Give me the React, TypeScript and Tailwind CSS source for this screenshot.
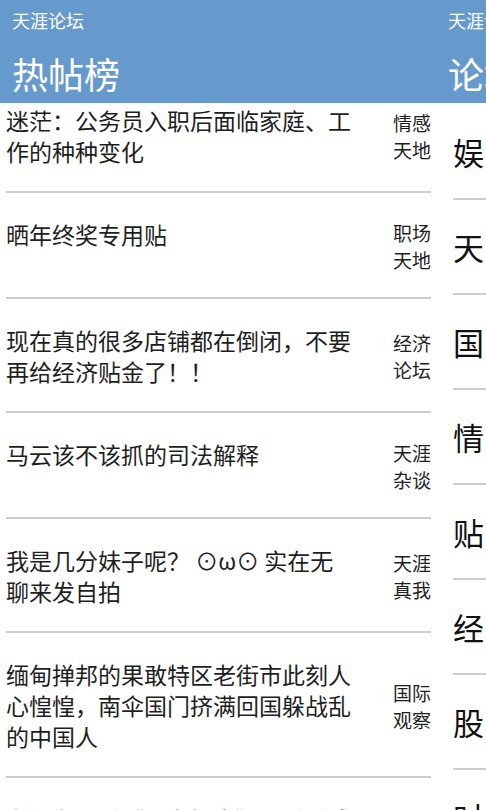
import React from 'react'

type Post = {
  title: string
  board: string[]
  first?: boolean
}

const posts: Post[] = [
  { title: '迷茫：公务员入职后面临家庭、工作的种种变化', board: ['情感', '天地'], first: true },
  { title: '晒年终奖专用贴', board: ['职场', '天地'] },
  { title: '现在真的很多店铺都在倒闭，不要再给经济贴金了！！', board: ['经济', '论坛'] },
  { title: '马云该不该抓的司法解释', board: ['天涯', '杂谈'] },
  { title: '我是几分妹子呢？ ⊙ω⊙ 实在无聊来发自拍', board: ['天涯', '真我'] },
  { title: '缅甸掸邦的果敢特区老街市此刻人心惶惶，南伞国门挤满回国躲战乱的中国人', board: ['国际', '观察'] },
  { title: '有没有人看《张有娇妻》？看后感觉', board: ['天涯', '杂谈'] },
]

const boards = ['娱', '天', '国', '情', '贴', '经', '股', '时']

const App = () => {
  return (
    <div className="w-[486px] h-[810px] overflow-hidden bg-white font-['Noto_Sans_CJK_SC',sans-serif]">
      {/* panorama header */}
      <div className="flex h-[103px] bg-[#6699cc] pl-[12px] text-white whitespace-nowrap">
        <div className="w-[436px] shrink-0 pt-[8px]">
          <div className="text-[18px] leading-[24px]">天涯论坛</div>
          <div className="mt-[19px] text-[36px] leading-[44px]">热帖榜</div>
        </div>
        <div className="shrink-0 pt-[8px]">
          <div className="text-[18px] leading-[24px]">天涯论坛</div>
          <div className="mt-[19px] text-[36px] leading-[44px]">论坛导航</div>
        </div>
      </div>

      <div className="flex">
        <div className="w-[431px] shrink-0 pl-[6px] text-[#1e1e1e]">
          {posts.map((p, i) => (
            <div
              key={i}
              className={
                p.first
                  ? 'flex items-start border-b-2 border-[#cccccc] pt-[2px] pb-[24px]'
                  : 'flex items-start border-b-2 border-[#cccccc] pt-[26px] pb-[24px]'
              }
            >
              <div className="w-[347px] text-[23px] leading-[31px]">{p.title}</div>
              <div className="ml-auto w-[38px] self-center text-right text-[19px] leading-[27px]">
                {p.board.map((b) => (
                  <div key={b}>{b}</div>
                ))}
              </div>
            </div>
          ))}
        </div>

        <div className="ml-[22px] w-[120px] shrink-0 pt-[2px] text-[#111111]">
          {boards.map((b) => (
            <div key={b} className="flex h-[95px] items-center border-b-2 border-[#cccccc] text-[31px] leading-none">
              {b}
            </div>
          ))}
        </div>
      </div>
    </div>
  )
}

export default App
